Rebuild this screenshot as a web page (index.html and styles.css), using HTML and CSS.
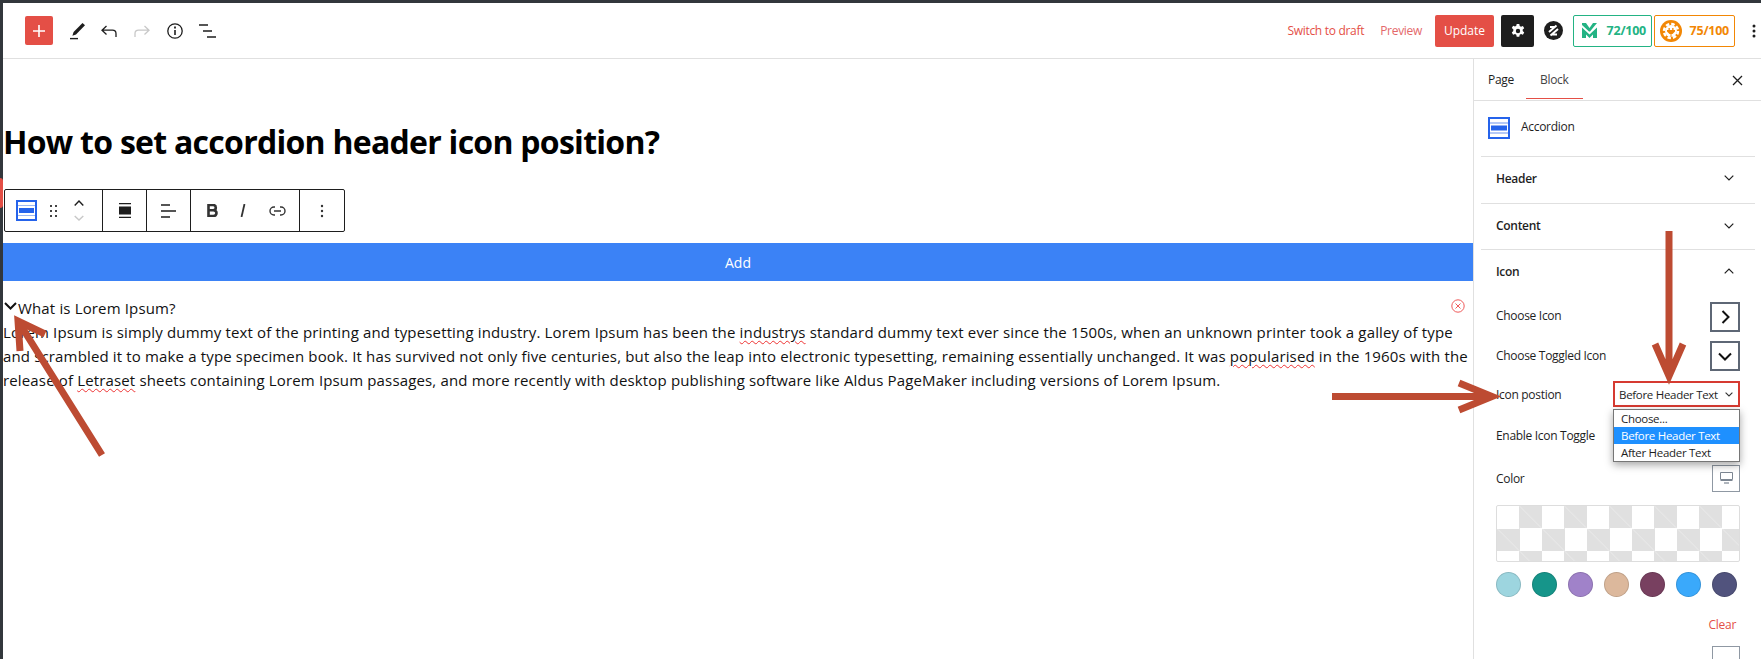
FILE: index.html
```html
<!DOCTYPE html>
<html lang="en">
<head>
  <meta charset="UTF-8">
  <title>How to set accordion header icon position?</title>
  <link rel="stylesheet" href="styles.css">
</head>
<body>
<div class="app">
  <header class="topbar">
    <div class="tools">
      <button class="inserter"><svg width="14" height="14" viewBox="0 0 14 14"><path d="M7 1v12M1 7h12" stroke="#fff" stroke-width="1.6"/></svg></button>
      <svg class="tool tool-pen" width="16" height="18" viewBox="0 0 16 18"><path d="M12.5 1 15 3.2 6 12.5l-3.6 1.2L3.6 10z" fill="#1e1e1e"/><path d="M0 16.6h8" stroke="#1e1e1e" stroke-width="1.4"/></svg>
      <svg class="tool" width="16" height="12" viewBox="0 0 16 12"><path d="M5.5 1 1 5.2l4.5 4.2M1 5.2h10.5c2.200 0 3.500 1.500 3.500 3.500V12" fill="none" stroke="#1e1e1e" stroke-width="1.3"/></svg>
      <svg class="tool" width="16" height="12" viewBox="0 0 16 12"><path d="M10.500 1 15 5.200l-4.500 4.200M15 5.200H4.500C2.300 5.200 1 6.700 1 8.700V12" fill="none" stroke="#c8c8c8" stroke-width="1.300"/></svg>
      <svg class="tool tool-info" width="16" height="16" viewBox="0 0 16 16"><circle cx="8" cy="8" r="7.200" fill="none" stroke="#1e1e1e" stroke-width="1.300"/><path d="M8 7v5" stroke="#1e1e1e" stroke-width="1.600"/><path d="M8 3.600v1.800" stroke="#1e1e1e" stroke-width="1.800"/></svg>
      <svg class="tool" width="17" height="14" viewBox="0 0 17 14"><path d="M0 1h9M4 7h9M8 13h9" stroke="#1e1e1e" stroke-width="1.500"/></svg>
    </div>
    <div class="actions">
      <a class="link-draft">Switch to draft</a>
      <a class="link-preview">Preview</a>
      <button class="update">Update</button>
      <button class="settings"><svg width="16" height="16" viewBox="0 0 16 16"><path fill-rule="evenodd" d="M6.700 1h2.600l.4 2 1.300.7 1.900-.7 1.300 2.300-1.500 1.300v1.500l1.500 1.300-1.300 2.300-1.900-.7-1.300.7-.4 2H6.700l-.4-2-1.300-.7-1.900.7-1.300-2.300 1.500-1.300V6.300L1.800 5l1.300-2.300 1.900.7 1.300-.7zM8 5.800a2.200 2.200 0 1 0 0 4.400 2.200 2.200 0 0 0 0-4.400z" fill="#fff"/></svg></button>
      <svg class="zlogo" width="19" height="19" viewBox="0 0 19 19"><circle cx="9.500" cy="9.500" r="9.500" fill="#1e1e1e"/><path d="M5 11 12.500 4.500M6.500 14.500l7.500-6.500M6 6h5M8 13.500h5" stroke="#fff" stroke-width="2" fill="none"/></svg>
      <div class="score score-green">
        <svg width="15" height="15" viewBox="0 0 15 15"><path d="M0 0h4l3.500 5L11 0h4L8 8.500H7L0 2z" fill="#23b384"/><path d="M0 4.500l7.500 7 7.500-7V15h-4v-3.500L7.500 15 4 11.500V15H0z" fill="#23b384"/></svg>
        <span>72/100</span>
      </div>
      <div class="score score-orange">
        <svg width="22" height="22" viewBox="0 0 22 22"><circle cx="11" cy="11" r="11" fill="#f28705"/><circle cx="11" cy="11" r="6" fill="#fff"/><circle cx="11" cy="11" r="7" fill="none" stroke="#fff" stroke-width="2.500" stroke-dasharray="3.500 2"/><path d="M8.500 8h1.300v2h2.400V8h1.300v2H15v1.500l-2.500 2.500h-1v3h-1v-3h-1L7 11.500V10h1.500z" fill="#f28705"/></svg>
        <span>75/100</span>
      </div>
      <svg class="kebab" width="4" height="14" viewBox="0 0 4 14"><circle cx="2" cy="2" r="1.500"/><circle cx="2" cy="7" r="1.500"/><circle cx="2" cy="12" r="1.500"/></svg>
    </div>
  </header>

  <div class="workspace">
    <main class="editor">
      <h1 class="post-title">How to set accordion header icon position?</h1>

      <div class="block-toolbar">
        <div class="tb-group tb-first">
          <svg width="21" height="21" viewBox="0 0 21 21"><rect x="1" y="1" width="19" height="19" fill="#fff" stroke="#2563eb" stroke-width="2"/><path d="M2 5.500h17M2 15.500h17" stroke="#9db8f3" stroke-width="1.200"/><rect x="3" y="8" width="15" height="5" fill="#2563eb"/></svg>
          <svg width="8" height="14" viewBox="0 0 8 14"><path d="M1 1h2v2H1zM6 1h2v2H6zM1 6h2v2H1zM6 6h2v2H6zM1 11h2v2H1zM6 11h2v2H6z" fill="#444"/></svg>
          <svg width="10" height="21" viewBox="0 0 10 21"><path d="M.7 5.500 5 1l4.300 4.500" fill="none" stroke="#1e1e1e" stroke-width="1.400"/><path d="M.7 16 5 20l4.300-4" fill="none" stroke="#c8c8c8" stroke-width="1.400"/></svg>
        </div>
        <div class="tb-group tb-align">
          <svg width="14" height="15" viewBox="0 0 14 15"><path d="M1 .7h12M1 14.300h12" stroke="#1e1e1e" stroke-width="1.300"/><rect x="1" y="3.500" width="12" height="8" fill="#1e1e1e"/></svg>
        </div>
        <div class="tb-group tb-text">
          <svg width="15" height="14" viewBox="0 0 15 14"><path d="M0 1h9M0 7h15M0 13h9" stroke="#1e1e1e" stroke-width="1.300"/></svg>
        </div>
        <div class="tb-group tb-format">
          <svg width="11" height="13" viewBox="0 0 11 13"><path d="M1.500 1h4.300c2 0 3 1 3 2.700S7.800 6.300 5.800 6.300H1.500zm0 5.300h4.800c2 0 3.200 1 3.200 2.800S8.300 12 6.300 12H1.500z" fill="none" stroke="#333" stroke-width="2.600"/></svg>
          <svg width="6" height="13" viewBox="0 0 6 13"><path d="M4.500 0 1.500 13" stroke="#333" stroke-width="1.800"/></svg>
          <svg width="17" height="10" viewBox="0 0 17 10"><path d="M6 1H5a4 4 0 0 0 0 8h1M11 1h1a4 4 0 0 1 0 8h-1M5 5h7" fill="none" stroke="#333" stroke-width="1.400"/></svg>
        </div>
        <div class="tb-group tb-more">
          <svg width="4" height="14" viewBox="0 0 4 14"><circle cx="2" cy="2" r="1.200" fill="#333"/><circle cx="2" cy="7" r="1.200" fill="#333"/><circle cx="2" cy="12" r="1.200" fill="#333"/></svg>
        </div>
      </div>

      <button class="add-bar">Add</button>

      <div class="acc-item">
        <div class="acc-head">
          <svg class="acc-chevron" width="13" height="8" viewBox="0 0 13 8"><path d="M1 1l5.500 5.500L12 1" fill="none" stroke="#111" stroke-width="2"/></svg>
          <span>What is Lorem Ipsum?</span>
          <svg class="acc-remove" width="14" height="14" viewBox="0 0 14 14"><circle cx="7" cy="7" r="6.200" fill="none" stroke="#ef5a5a"/><path d="M4.500 4.500l5 5M9.500 4.500l-5 5" stroke="#ef5a5a"/></svg>
        </div>
        <p class="acc-body">Lorem Ipsum is simply dummy text of the printing and typesetting industry. Lorem Ipsum has been the <span class="typo">industrys</span> standard dummy text ever since the 1500s, when an unknown printer took a galley of type and scrambled it to make a type specimen book. It has survived not only five centuries, but also the leap into electronic typesetting, remaining essentially unchanged. It was <span class="typo">popularised</span> in the 1960s with the release of <span class="typo">Letraset</span> sheets containing Lorem Ipsum passages, and more recently with desktop publishing software like Aldus PageMaker including versions of Lorem Ipsum.</p>
      </div>
    </main>

    <aside class="sidebar">
      <div class="tabs">
        <span class="tab">Page</span>
        <span class="tab tab-active">Block</span>
        <svg class="tabs-close" width="11" height="11" viewBox="0 0 11 11"><path d="M1 1l9 9M10 1l-9 9" stroke="#1e1e1e" stroke-width="1.300"/></svg>
      </div>
      <div class="block-card">
        <svg width="22" height="22" viewBox="0 0 22 22"><rect x="1" y="1" width="20" height="20" fill="#fff" stroke="#2563eb" stroke-width="2"/><path d="M2 6h18M2 16h18" stroke="#9db8f3" stroke-width="1.400"/><rect x="3" y="8.500" width="16" height="5" fill="#2563eb"/></svg>
        <span>Accordion</span>
      </div>

      <div class="panel">
        <span class="panel-title">Header</span>
        <svg width="10" height="6" viewBox="0 0 10 6"><path d="M.7.7 5 5 9.300.7" fill="none" stroke="#1e1e1e" stroke-width="1.200"/></svg>
      </div>
      <div class="panel panel-content">
        <span class="panel-title">Content</span>
        <svg width="10" height="6" viewBox="0 0 10 6"><path d="M.7.7 5 5 9.300.7" fill="none" stroke="#1e1e1e" stroke-width="1.200"/></svg>
      </div>
      <div class="panel panel-open">
        <span class="panel-title">Icon</span>
        <svg width="10" height="6" viewBox="0 0 10 6"><path d="M.7 5.300 5 1l4.300 4.300" fill="none" stroke="#1e1e1e" stroke-width="1.200"/></svg>
      </div>

      <div class="fields">
        <div class="field field-icon">
          <span>Choose Icon</span>
          <div class="icon-box"><svg width="9" height="14" viewBox="0 0 9 14"><path d="M1.500 1l6 6-6 6" fill="none" stroke="#111" stroke-width="2"/></svg></div>
        </div>
        <div class="field field-icon">
          <span>Choose Toggled Icon</span>
          <div class="icon-box"><svg width="14" height="9" viewBox="0 0 14 9"><path d="M1 1.500l6 6 6-6" fill="none" stroke="#111" stroke-width="2"/></svg></div>
        </div>
        <div class="field field-select">
          <span>Icon postion</span>
          <div class="select-box">
            <span>Before Header Text</span>
            <svg width="8" height="5" viewBox="0 0 8 5"><path d="M.6.6 4 4 7.400.6" fill="none" stroke="#333" stroke-width="1.100"/></svg>
          </div>
          <ul class="select-menu">
            <li>Choose...</li>
            <li class="selected">Before Header Text</li>
            <li>After Header Text</li>
          </ul>
        </div>
        <div class="field field-toggle"><span>Enable Icon Toggle</span></div>
        <div class="field field-color">
          <span>Color</span>
          <div class="device-box"><svg width="13" height="12" viewBox="0 0 13 12"><path d="M.5.500h12v7H.5zM.5 8.500h12" fill="none" stroke="#7c8692"/><path d="M4 11h5" stroke="#7c8692" stroke-width="1.200"/></svg></div>
        </div>
        <div class="checker"></div>
        <div class="swatches">
          <span class="swatch sw-1"></span>
          <span class="swatch sw-2"></span>
          <span class="swatch sw-3"></span>
          <span class="swatch sw-4"></span>
          <span class="swatch sw-5"></span>
          <span class="swatch sw-6"></span>
          <span class="swatch sw-7"></span>
        </div>
        <div class="clear-row"><a>Clear</a></div>
        <div class="next-box"></div>
      </div>
    </aside>
  </div>
</div>

<div class="edge-mark"></div>

<svg class="arrows" width="1761" height="659" viewBox="0 0 1761 659">
  <g fill="none" stroke="#bd4b32" stroke-width="7">
    <path d="M1669 231V376M1655 344l14 32 14-32"/>
    <path d="M1332 396.500H1488M1459 383l33 13.500-33 13.500"/>
    <path d="M102 455 18 321M45 334 18 321l2 30"/>
  </g>
</svg>
</body>
</html>
```
FILE: styles.css
```css
*{box-sizing:border-box;margin:0;padding:0}
html,body{height:100%;overflow:hidden}
body{background:#32373c;font-family:"Open Sans","Noto Sans",sans-serif;color:#1e1e1e;font-size:12px;letter-spacing:-.3px}
button{font:inherit;border:0;cursor:pointer}
svg{display:block}

.app{margin:3px 0 0 3px;height:656px;background:#fff;display:flex;flex-direction:column;overflow:hidden}

/* top bar */
.topbar{height:56px;flex:none;border-bottom:1px solid #e0e0e0;display:flex;align-items:center;justify-content:space-between;padding:0 5px 0 22px}
.tools{display:flex;align-items:center}
.inserter{width:28px;height:29px;background:#e44f46;border-radius:2px;display:flex;align-items:center;justify-content:center;margin-right:17px}
.tool{margin-right:17px}
.tool-pen{margin-right:15px}
.tool-info{margin-right:16px}
.actions{display:flex;align-items:center}
.link-draft{color:#e44f46;margin-right:16px}
.link-preview{color:#e4686a;margin-right:13px}
.update{width:59px;height:32px;background:#e44f46;color:#fff;border-radius:2px;margin-right:7px;font-size:12px}
.settings{width:33px;height:32px;background:#1e1e1e;border-radius:2px;display:flex;align-items:center;justify-content:center;margin-right:10px}
.zlogo{margin-right:10px}
.score{height:32px;border:1px solid;border-radius:2px;display:flex;align-items:center;justify-content:space-between;font-weight:700;font-size:12.500px;letter-spacing:-.25px}
.score-green{width:79px;color:#23b384;border-color:#23b384;padding:0 5px 0 8px;margin-right:2px}
.score-orange{width:81px;color:#f28705;border-color:#f28705;padding:0 5px 0 5px}
.kebab{margin-left:17px;fill:#1e1e1e}

.workspace{flex:1;display:flex;min-height:0}

/* editor area */
.editor{flex:1;min-width:0}
.post-title{font-size:32px;line-height:44px;font-weight:700;color:#000;margin-top:61px;letter-spacing:-.73px}
.block-toolbar{margin:25px 0 0 1px;width:341px;height:43px;border:1px solid #1e1e1e;border-radius:2px;display:flex;background:#fff}
.tb-group{display:flex;align-items:center;justify-content:center;border-right:1px solid #1e1e1e}
.tb-first{width:98px;justify-content:flex-start;padding-left:11px;gap:12px}
.tb-first svg:last-child{margin-left:5px}
.tb-align,.tb-text{width:44px}
.tb-format{width:109px;gap:22.500px;padding-left:2px}
.tb-more{flex:1;border-right:0}
.add-bar{display:block;width:100%;height:38px;margin-top:11px;background:#3b82f6;color:#fff;font-size:14px;text-align:center;letter-spacing:0}
.acc-item{margin-top:15px;font-size:15px;letter-spacing:.15px;color:#111}
.acc-head{display:flex;align-items:center;height:24px;position:relative}
.acc-chevron{margin:0 1px 4px 1px}
.acc-remove{position:absolute;right:8px;top:3px}
.acc-body{line-height:24px}
.typo{text-decoration:underline wavy #e33;text-decoration-thickness:1px;text-underline-offset:2px}

/* sidebar */
.sidebar{width:288px;flex:none;border-left:1px solid #e0e0e0}
.tabs{height:42px;border-bottom:1px solid #e0e0e0;display:flex;align-items:center;padding-left:14px;position:relative}
.tab{margin-right:26px}
.tab-active{position:relative;color:#444}
.tab-active:after{content:"";position:absolute;left:-14px;right:-14px;top:27px;height:1px;background:#e44f46}
.tabs-close{position:absolute;right:18px;top:16px}
.block-card{height:55px;display:flex;align-items:flex-start;gap:11px;padding:16px 0 0 14px}
.block-card span{margin-top:1px}
.panel{margin:0 6px 0 7px;height:47px;border-top:1px solid #e0e0e0;padding:0 21px 4px 15px;display:flex;align-items:center;justify-content:space-between}
.panel-content{height:46px;padding-bottom:2px}
.panel-title{font-weight:600;letter-spacing:-.3px}
.fields{margin:0 21px 0 22px}
.field{display:flex;align-items:center;justify-content:space-between;position:relative}
.field-icon{height:30px;margin-bottom:9px}
.field-icon span{margin-top:-2px}
.field-icon:first-child span{margin-top:-4px}
.panel-open{margin-bottom:6px}
.icon-box{width:30px;height:30px;border:2px solid #5e6775;display:flex;align-items:center;justify-content:center}
.field-select{height:26px;margin-top:10px}
.select-box{width:127px;height:26px;border:2px solid #d63a31;display:flex;align-items:center;justify-content:space-between;padding:0 5px 0 4px;background:#fff;font-size:11.500px}
.select-menu{position:absolute;right:0;top:28px;width:127px;height:53px;list-style:none;background:#fff;border:1px solid #767676;box-shadow:0 3px 8px rgba(0,0,0,.35);font-size:11.500px;z-index:2}
.select-menu li{height:17px;line-height:17px;padding-left:7px}
.select-menu .selected{background:#1e90ff;color:#fff}
.field-toggle{height:20px;margin-top:18px}
.field-color{height:26px;margin-top:20px}
.device-box{width:28px;height:27px;border:1px solid #8f98a3;display:flex;align-items:center;justify-content:center}
.checker{height:57px;margin-top:14px;border:1px solid #ddd;border-radius:2px;background-color:#fff;background-image:linear-gradient(45deg,transparent 49.500%,rgba(255,255,255,.35) 50%,transparent 50.500%),conic-gradient(#e0e0e0 25%,#fff 0 50%,#e0e0e0 0 75%,#fff 0);background-size:22.500px 22.500px,45px 45px}
.swatches{display:flex;justify-content:space-between;margin-top:10px;padding-right:3px}
.swatch{width:25px;height:25px;border-radius:50%;border:1px solid rgba(0,0,0,.13)}
.sw-1{background:#9dd5df}
.sw-2{background:#16958a}
.sw-3{background:#a082c9}
.sw-4{background:#dcb89c}
.sw-5{background:#784060}
.sw-6{background:#3aa9fb}
.sw-7{background:#51537d}
.clear-row{display:flex;justify-content:flex-end;margin-top:19px;padding-right:4px;color:#e44f46}
.next-box{width:28px;height:20px;margin:13px 0 0 auto;border:1px solid #8f98a3}

.edge-mark{position:absolute;left:0;top:178px;width:3px;height:30px;background:#e44f46;border-radius:0 3px 3px 0}
.arrows{position:absolute;left:0;top:0;pointer-events:none;z-index:5}
```
